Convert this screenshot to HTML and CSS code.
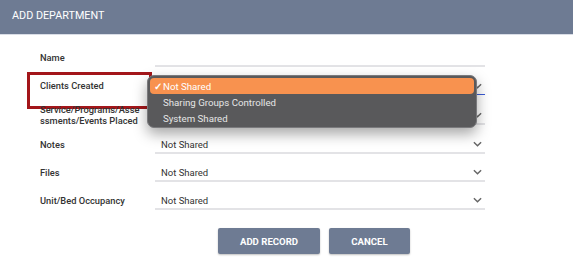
FILE: index.html
```html
<!DOCTYPE html>
<html lang="en">
<head>
    <meta charset="UTF-8">
    <title>Add Department</title>
    <link rel="stylesheet" href="styles.css">
</head>
<body>
    <div class="modal">
        <div class="modal-header">ADD DEPARTMENT</div>
        <div class="form">
            <div class="row">
                <div class="label">Name</div>
                <div class="field field-text"></div>
            </div>
            <div class="row">
                <div class="label label-highlight">Clients Created</div>
                <div class="field field-active">
                    <span class="value">Not Shared</span>
                    <svg class="chevron" viewBox="0 0 10 6"><path d="M1 1l4 4 4-4" /></svg>
                </div>
            </div>
            <div class="row">
                <div class="label">Service/Programs/Asse<br>ssments/Events Placed</div>
                <div class="field">
                    <span class="value">Not Shared</span>
                    <svg class="chevron" viewBox="0 0 10 6"><path d="M1 1l4 4 4-4" /></svg>
                </div>
            </div>
            <div class="row">
                <div class="label">Notes</div>
                <div class="field">
                    <span class="value">Not Shared</span>
                    <svg class="chevron" viewBox="0 0 10 6"><path d="M1 1l4 4 4-4" /></svg>
                </div>
            </div>
            <div class="row">
                <div class="label">Files</div>
                <div class="field">
                    <span class="value">Not Shared</span>
                    <svg class="chevron" viewBox="0 0 10 6"><path d="M1 1l4 4 4-4" /></svg>
                </div>
            </div>
            <div class="row">
                <div class="label">Unit/Bed Occupancy</div>
                <div class="field">
                    <span class="value">Not Shared</span>
                    <svg class="chevron" viewBox="0 0 10 6"><path d="M1 1l4 4 4-4" /></svg>
                </div>
            </div>
            <div class="actions">
                <button class="btn btn-add">ADD RECORD</button>
                <button class="btn btn-cancel">CANCEL</button>
            </div>
        </div>

        <div class="dropdown">
            <div class="option selected"><span class="check">✓</span>Not Shared</div>
            <div class="option">Sharing Groups Controlled</div>
            <div class="option">System Shared</div>
        </div>
    </div>
</body>
</html>
```

FILE: styles.css
```css
* {
    box-sizing: border-box;
    font-family: Roboto, 'Liberation Sans', Arial, sans-serif;
}
body {
    margin: 0;
    background: white;
    color: #333;
}
.modal {
    position: relative;
    width: 573px;
    height: 268px;
    background: white;
}
.modal-header {
    height: 35px;
    background-color: #6e7b93;
    border-bottom: 1px solid #d9dde6;
    color: white;
    font-size: 10.8px;
    line-height: 32px;
    padding-left: 12px;
}
.form {
    padding: 14px 88px 0 40px;
    display: flex;
    flex-direction: column;
    gap: 10px;
}
.row {
    display: flex;
    align-items: center;
}
.label {
    position: relative;
    width: 115px;
    font-size: 9.3px;
    font-weight: 500;
    line-height: 10.5px;
    color: #333;
    white-space: nowrap;
}
.label-highlight::before {
    content: '';
    position: absolute;
    left: -13px;
    top: -9px;
    width: 119px;
    height: 31px;
    border: 3px solid #a3161a;
}
.field {
    flex-grow: 1;
    height: 18px;
    border-bottom: 2px solid #e3e3e6;
    display: flex;
    align-items: center;
    padding: 0 3px 0 6px;
}
.field-active {
    border-bottom: 1px solid #3b5bd6;
}
.value {
    flex-grow: 1;
    font-size: 9.5px;
    color: #333;
}
.chevron {
    width: 9px;
    height: 6px;
    fill: none;
    stroke: #666;
    stroke-width: 1.6;
}
.actions {
    display: flex;
    gap: 9px;
    margin-top: 8px;
    padding-left: 178px;
}
.btn {
    height: 26px;
    border: none;
    border-radius: 2px;
    background-color: #6e7b93;
    color: white;
    font-size: 9.6px;
    font-weight: 700;
    box-shadow: 0 1px 2px rgba(0, 0, 0, 0.25);
}
.btn-add {
    width: 102px;
}
.btn-cancel {
    width: 81px;
}
.dropdown {
    position: absolute;
    left: 147px;
    top: 75px;
    width: 330px;
    height: 53px;
    background-color: #59595b;
    border: 1px solid #7a7a7d;
    border-radius: 7px;
    padding: 2px;
    box-shadow: 0 6px 14px rgba(0, 0, 0, 0.35);
}
.option {
    height: 16px;
    line-height: 17px;
    font-size: 9.7px;
    color: #e6e6e6;
    padding-left: 13px;
    position: relative;
}
.option.selected {
    background-color: #f8924f;
    border-radius: 4px;
    color: white;
}
.check {
    position: absolute;
    left: 4px;
    font-size: 9.5px;
    font-weight: 700;
}
```
